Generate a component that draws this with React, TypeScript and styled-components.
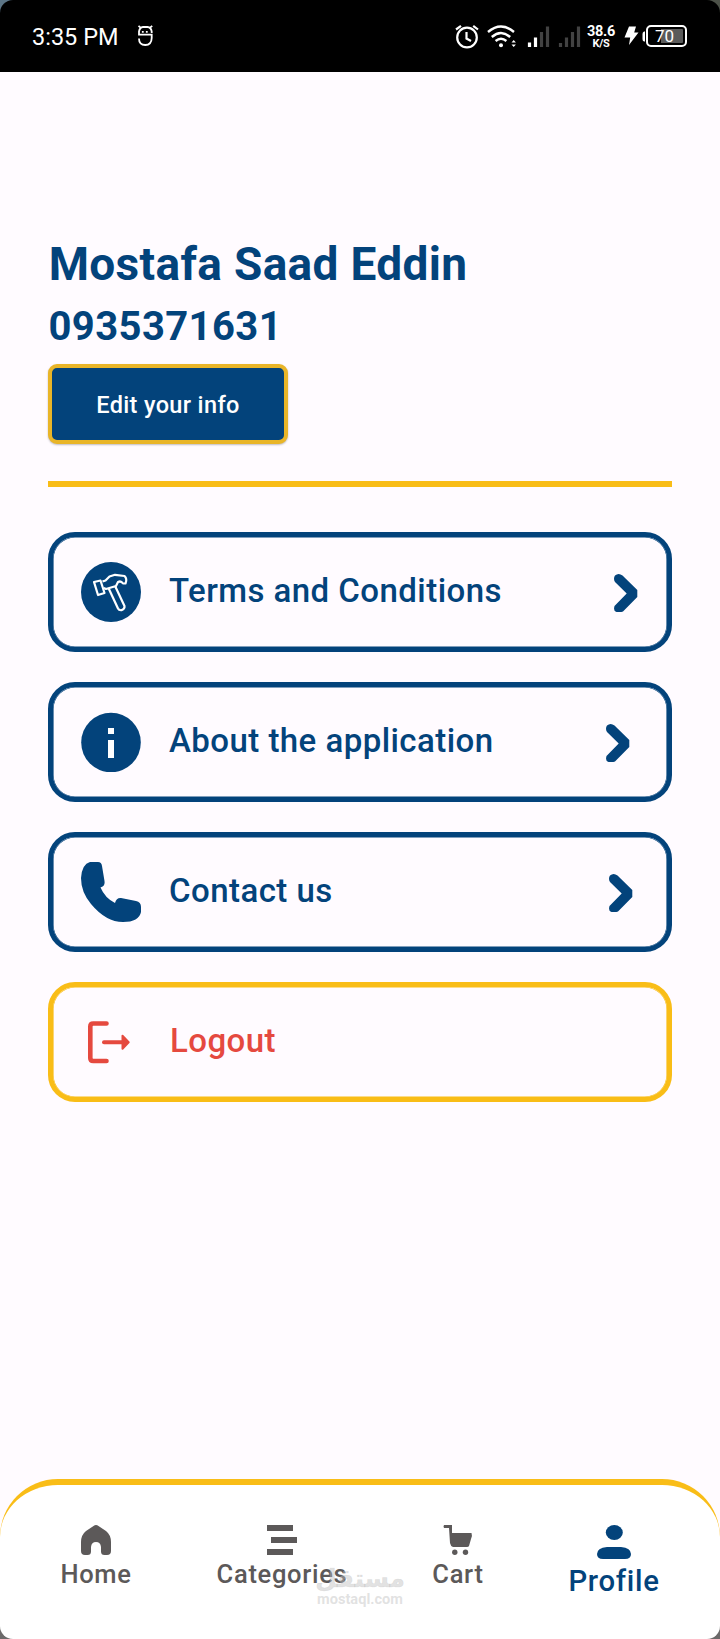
import React from "react";
import styled, { createGlobalStyle } from "styled-components";

const NAVY = "#03437b";
const GOLD = "#f9bd17";
const RED = "#e5493f";
const GREY = "#5c5959";
const SURFACE = "#fffbff";

const GlobalStyle = createGlobalStyle`
  * { box-sizing: border-box; }
  body { margin: 0; background: ${SURFACE}; font-family: Roboto, "Liberation Sans", sans-serif; }
`;

const Screen = styled.div`
  position: relative;
  display: flex;
  flex-direction: column;
  width: 720px;
  height: 1639px;
  overflow: hidden;
  background: ${SURFACE};
`;

const StatusBackdrop = styled.div`
  flex: none;
  background: linear-gradient(90deg, #5c7586 50%, #4c5148 50%);
`;

const StatusBar = styled.header`
  display: flex;
  align-items: center;
  justify-content: space-between;
  height: 72px;
  padding: 0 33px 0 32px;
  background: #000;
  color: #fff;
  border-radius: 13px 13px 0 0;
`;

const StatusGroup = styled.div<{ $gap?: number }>`
  display: flex;
  align-items: center;
  gap: ${(p) => p.$gap ?? 0}px;
`;

const Clock = styled.span`
  font-size: 23.5px;
  line-height: 28px;
  margin-top: 2px;
`;

const Content = styled.main`
  flex: 1;
  display: flex;
  flex-direction: column;
  align-items: stretch;
  padding: 164px 48px 0;
`;

const Name = styled.h1`
  margin: 0;
  padding-left: 0.7px;
  height: 60px;
  font-size: 46px;
  line-height: 56px;
  font-weight: 700;
  letter-spacing: 0.34px;
  color: ${NAVY};
  white-space: nowrap;
`;

const Phone = styled.p`
  margin: 0;
  padding-left: 0.5px;
  height: 68px;
  font-size: 40px;
  line-height: 62px;
  font-weight: 700;
  letter-spacing: 0.4px;
  color: ${NAVY};
`;

const EditButton = styled.button`
  align-self: flex-start;
  width: 240px;
  height: 80px;
  padding: 1px 0 0;
  border: 4px solid #e9b528;
  border-radius: 9px;
  background: ${NAVY};
  color: #fff;
  font: 500 23.5px/28px Roboto, sans-serif;
  letter-spacing: 0.35px;
  box-shadow: 0 1px 2px rgba(0, 0, 0, 0.25);
`;

const Divider = styled.hr`
  width: 100%;
  height: 6px;
  margin: 37px 0 45px;
  border: 0;
  background: ${GOLD};
`;

const CardList = styled.div`
  display: flex;
  flex-direction: column;
  gap: 30px;
`;

const Card = styled.div<{ $tone: string; $end?: number }>`
  display: flex;
  align-items: center;
  height: 120px;
  padding: 0 ${(p) => p.$end ?? 0}px 0 28px;
  border: 5px solid ${(p) => p.$tone};
  border-radius: 27px;
  box-shadow: inset 0 0 0 0.6px ${(p) => p.$tone};
`;

const CardIcon = styled.div<{ $width?: number }>`
  flex: none;
  display: flex;
  width: ${(p) => p.$width ?? 88}px;
`;

const CardLabel = styled.span<{ $color?: string }>`
  flex: 1;
  padding-bottom: 3px;
  font-size: 33px;
  line-height: 40px;
  font-weight: 500;
  letter-spacing: 0.45px;
  color: ${(p) => p.$color ?? NAVY};
`;

const ChevronSvg = styled.svg`
  flex: none;
  margin-top: 2px;
`;

const NavBackdrop = styled.div`
  flex: none;
  background: linear-gradient(${SURFACE} 50%, #6c6a6a 50%);
`;

const NavBar = styled.nav`
  display: flex;
  align-items: flex-start;
  height: 160px;
  padding-top: 40px;
  background: #fff;
  border-top: 6px solid ${GOLD};
  border-radius: 58px 58px 13px 13px;
`;

const NavItem = styled.div<{ $width: number; $active?: boolean }>`
  display: flex;
  flex-direction: column;
  align-items: center;
  width: ${(p) => p.$width}px;
  color: ${(p) => (p.$active ? NAVY : GREY)};
  font-size: ${(p) => (p.$active ? 29.3 : 25.5)}px;
  line-height: ${(p) => (p.$active ? 36 : 32)}px;
  font-weight: 500;
  letter-spacing: 0.7px;

  svg { display: block; margin-bottom: ${(p) => (p.$active ? 4 : 3)}px; }
`;

const Watermark = styled.div`
  position: absolute;
  left: 317px;
  top: 1567px;
  width: 86px;
  display: flex;
  flex-direction: column;
  align-items: center;
  color: rgba(190, 190, 190, 0.45);
  font-weight: 700;
  white-space: nowrap;
`;

const WatermarkArabic = styled.span`
  font: 700 24.5px/24px "DejaVu Sans", sans-serif;
  -webkit-text-stroke: 0.6px rgba(190, 190, 190, 0.3);
`;

const WatermarkLatin = styled.span`
  font-size: 14.6px;
  line-height: 16px;
`;

const Speed = styled.div`
  display: flex;
  flex-direction: column;
  align-items: center;
  width: 28px;
  margin: 3px 9px 0 5px;
  font-weight: 700;
  font-size: 14.5px;
  line-height: 12px;
  letter-spacing: -0.3px;

  small { font-size: 11px; line-height: 11px; }
`;

const Battery = styled.div`
  width: 41px;
  height: 22px;
  margin-left: 1px;
  padding: 2px;
  border: 2px solid #fff;
  border-radius: 5px;
  background: linear-gradient(90deg, #000 11px, #5a5a5a 11px) content-box;
  font-size: 17px;
  line-height: 15px;
  text-indent: 5px;
`;

const MascotIcon = () => (
  <svg width="17" height="22" viewBox="0 0 17 22" fill="none" stroke="#fff" strokeWidth="1.800">
    <path d="M14.700 8V6.500Q14 2.300 10.500 2H6Q2.800 2.300 2 6.500V9.700H14.700V13Q14.500 20 8.300 20Q2 20 2 13.500" />
    <path d="M1.500 0.800L4.200 3.200M15.200 0.800L12.500 3.200" />
    <path d="M4.900 6.900H6.700M8.900 6.900H10.700" />
  </svg>
);

const StatusIcons = () => (
  <svg width="128" height="26" viewBox="454 22 128 26" fill="none" stroke="#fff">
    <circle cx="467" cy="36.500" r="9.800" strokeWidth="2.200" />
    <path d="M466.500 31V37.500L471 40M456 28.500L461 24.800M473.200 24.800L478 28.500" strokeWidth="2.200" />
    <path d="M488 31Q501 20 514 31M491.800 36Q501 28 510.200 36M495.600 40Q501 35.500 506.400 40" strokeWidth="2.400" />
    <circle cx="501" cy="44.300" r="2" fill="#fff" stroke="none" />
    <path d="M511.500 41.500L513.700 39L515.900 41.500ZM511.500 43.500L513.700 46L515.900 43.500Z" fill="#fff" stroke="none" />
    <path d="M529.500 41.500V46M535.500 36.500V46" strokeWidth="3.200" />
    <path d="M541.500 31V46M547.500 25.500V46M560.500 42V46M566.500 36.500V46M572.500 31V46M578.500 25.500V46" strokeWidth="3.200" stroke="#424242" />
  </svg>
);

const BoltIcon = () => (
  <svg width="21" height="20" viewBox="0 0 21 20">
    <path d="M5 0.500H12L10.200 6.500H14.500L5 19L6.200 11.500H0.500Z" fill="#fff" />
    <path d="M20 5.500H21V15.500H20Q18.500 15 18.500 13V8Q18.500 6 20 5.500Z" fill="#fff" />
  </svg>
);

const HammerIcon = () => (
  <svg width="60" height="60" viewBox="0 0 60 60">
    <circle cx="30" cy="30" r="30" fill={NAVY} />
    <g fill="none" stroke="#fff" strokeWidth="2.200" strokeLinejoin="round">
      <path d="M13 20L19.500 18.500L23.500 31L17 33Z" />
      <path d="M21.500 19.500L24.500 18.500L28.500 14.500L34 12.800L43.500 14Q46.500 17 44.500 21.500L42 21.500Q40 18.500 37 20L35 24L25 27L22.800 26" />
      <path d="M27.700 26.500L37 46.500Q38 48.500 40.500 48.200Q44 47 43.500 44L34.300 24.500" />
    </g>
  </svg>
);

const InfoIcon = () => (
  <svg width="60" height="60" viewBox="0 0 60 60">
    <circle cx="30" cy="30.500" r="29.800" fill={NAVY} />
    <path d="M27 16H33V22H27ZM27 28H33V46H27Z" fill="#fff" />
  </svg>
);

const PhoneIcon = () => (
  <svg width="60" height="60" viewBox="0 0 60 60">
    <path d="M9 0H17Q20.500 0 21 4L23.500 19Q24.500 24 19.500 25.500Q24 36 34 41Q35.500 35.500 40 36L55 39Q60 40 60 45V50Q58 60 42 60Q25 60 10 42Q0 30 0 16Q1 2 9 0Z" fill={NAVY} />
  </svg>
);

const LogoutIcon = () => (
  <svg width="60" height="60" viewBox="0 0 60 60" fill="none" stroke={RED} strokeWidth="4.600" strokeLinecap="round">
    <path d="M25.500 11.500H12.300Q9.300 11.500 9.300 14.500V46Q9.300 49 12.300 49H25.500" />
    <path d="M23 30.300H43" strokeWidth="4" />
    <path d="M41.500 23.800V36.800L47.700 30.300Z" fill={RED} strokeWidth="2" strokeLinejoin="round" />
  </svg>
);

const Chevron = () => (
  <ChevronSvg width="24" height="38" viewBox="0 0 24 38">
    <path d="M1 1.500Q4.500 -1.500 8.500 1.500L23.300 16V23L9 37.500Q7 38.500 2.500 38Q-1 37 0.500 32L12.700 19.500L1 8Q-1 4.500 1 1.500Z" fill={NAVY} />
  </ChevronSvg>
);

const HomeIcon = () => (
  <svg width="30" height="30" viewBox="0 0 30 30" fill={GREY}>
    <path d="M12.500 1Q15 -1 17.500 1L25 6Q30 10 30 17V26Q30 30 26 30H23.500Q20 30 20 26.500V22Q19.500 17 15 17T10 22V26.500Q10 30 6.500 30H4Q0 30 0 26V17Q0 10 5 6Z" />
  </svg>
);

const CategoriesIcon = () => (
  <svg width="30" height="30" viewBox="0 0 30 30" fill={GREY}>
    <path d="M0 0H26V6H0ZM4 12H30V18H4ZM0 24H26V30H0Z" />
  </svg>
);

const CartIcon = () => (
  <svg width="30" height="30" viewBox="0 0 30 30" fill={GREY}>
    <path d="M1 0H9V8H28.500Q29.500 10 28 14L26 21Q25.500 22 24 22H10Q7.500 21 7 18L6 3H1Q0 1.500 1 0Z" />
    <circle cx="11.800" cy="27.300" r="2.700" />
    <circle cx="22.500" cy="27.300" r="2.700" />
  </svg>
);

const ProfileIcon = () => (
  <svg width="34" height="34" viewBox="0 0 34 34" fill={NAVY}>
    <ellipse cx="17.300" cy="7.500" rx="8.500" ry="7.500" />
    <path d="M10 22H24Q34 23 34 29Q34 34 28 34H6Q0 34 0 29Q0 23 10 22Z" />
  </svg>
);

export default function App() {
  return (
    <Screen>
      <GlobalStyle />
      <StatusBackdrop>
        <StatusBar>
          <StatusGroup $gap={19}>
            <Clock>3:35 PM</Clock>
            <MascotIcon />
          </StatusGroup>
          <StatusGroup>
            <StatusIcons />
            <Speed>
              38.6<small>K/S</small>
            </Speed>
            <BoltIcon />
            <Battery>70</Battery>
          </StatusGroup>
        </StatusBar>
      </StatusBackdrop>

      <Content>
        <Name>Mostafa Saad Eddin</Name>
        <Phone>0935371631</Phone>
        <EditButton>Edit your info</EditButton>
        <Divider />
        <CardList>
          <Card $tone={NAVY} $end={29}>
            <CardIcon><HammerIcon /></CardIcon>
            <CardLabel>Terms and Conditions</CardLabel>
            <Chevron />
          </Card>
          <Card $tone={NAVY} $end={37}>
            <CardIcon><InfoIcon /></CardIcon>
            <CardLabel>About the application</CardLabel>
            <Chevron />
          </Card>
          <Card $tone={NAVY} $end={34}>
            <CardIcon><PhoneIcon /></CardIcon>
            <CardLabel>Contact us</CardLabel>
            <Chevron />
          </Card>
          <Card $tone={GOLD}>
            <CardIcon $width={89}><LogoutIcon /></CardIcon>
            <CardLabel $color={RED}>Logout</CardLabel>
          </Card>
        </CardList>
      </Content>

      <NavBackdrop>
        <NavBar>
          <NavItem $width={192}><HomeIcon />Home</NavItem>
          <NavItem $width={180}><CategoriesIcon />Categories</NavItem>
          <NavItem $width={172}><CartIcon />Cart</NavItem>
          <NavItem $width={140} $active><ProfileIcon />Profile</NavItem>
        </NavBar>
      </NavBackdrop>

      <Watermark>
        <WatermarkArabic lang="ar">مستقل</WatermarkArabic>
        <WatermarkLatin>mostaql.com</WatermarkLatin>
      </Watermark>
    </Screen>
  );
}
